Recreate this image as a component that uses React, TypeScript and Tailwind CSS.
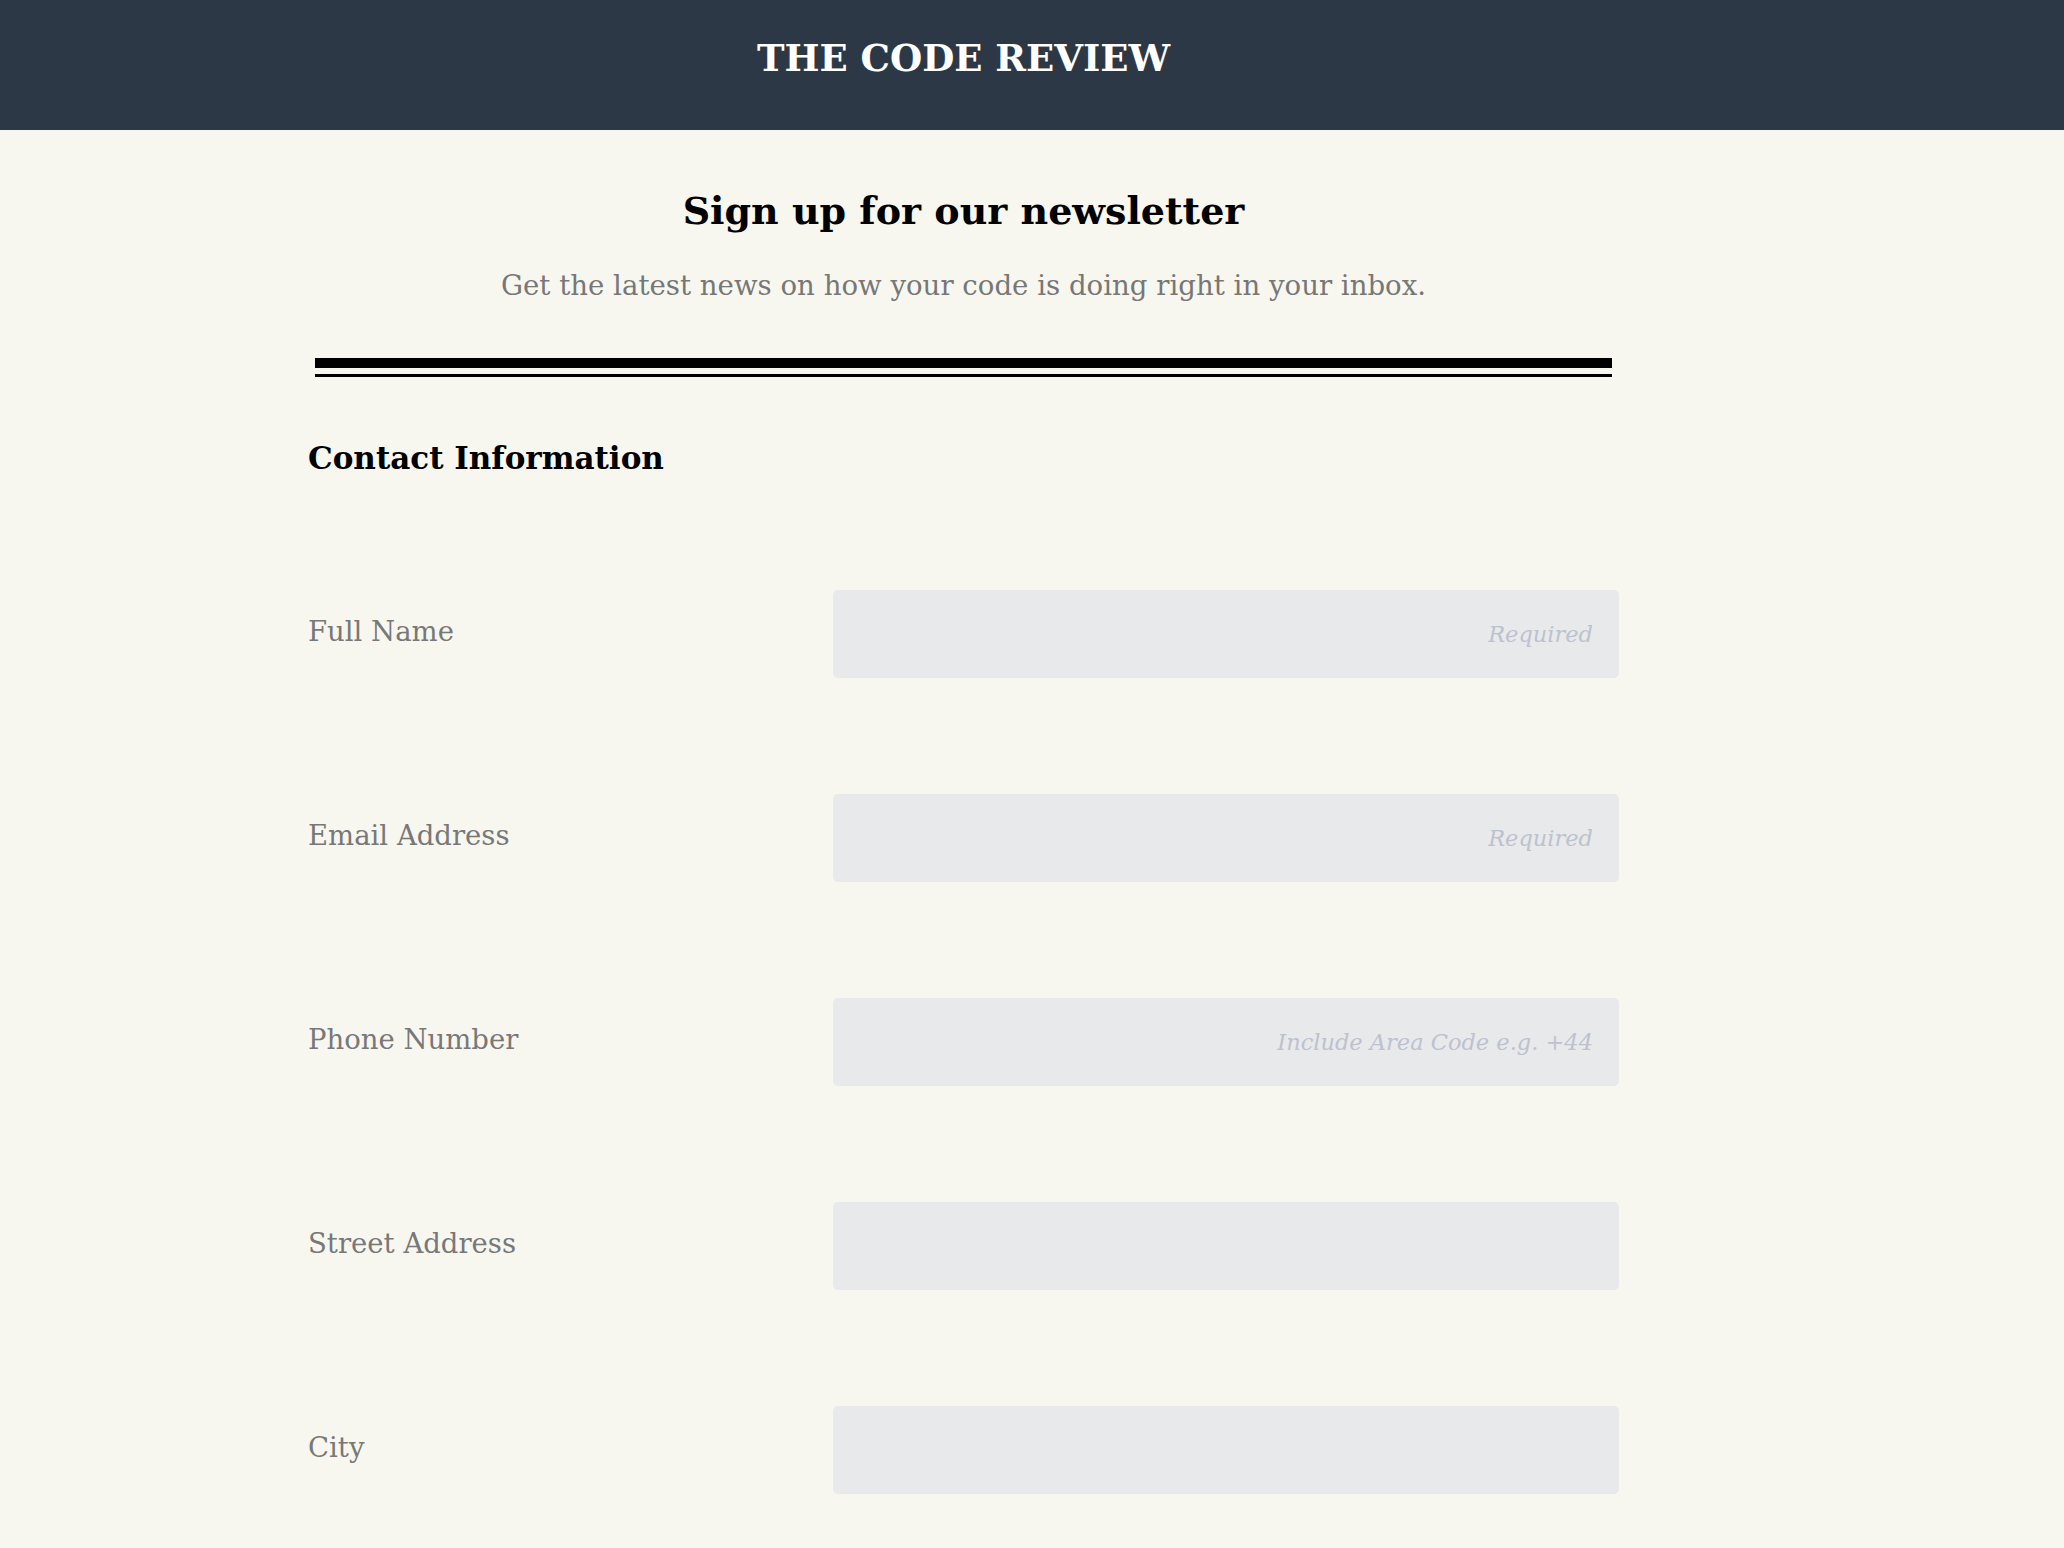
const fields = [
  { label: 'Full Name', placeholder: 'Required' },
  { label: 'Email Address', placeholder: 'Required' },
  { label: 'Phone Number', placeholder: 'Include Area Code e.g. +44' },
  { label: 'Street Address', placeholder: '' },
  { label: 'City', placeholder: '' },
]

export default function App() {
  return (
    <div className="min-h-screen bg-[#f7f7f0] font-['DejaVu_Serif',serif]">
      <header className="h-[130px] bg-[#2d3846]">
        <div className="ml-[308px] w-[1311px] pt-[34px] text-center">
          <h1 className="text-[37px] leading-[48px] font-bold text-white">THE CODE REVIEW</h1>
        </div>
      </header>

      <main className="ml-[308px] w-[1311px]">
        <h2 className="mt-[57px] text-center text-[38px] leading-[48px] font-bold text-black">
          Sign up for our newsletter
        </h2>
        <p className="mt-[33px] text-center text-[27.6px] leading-[36px] text-[#777777]">
          Get the latest news on how your code is doing right in your inbox.
        </p>

        <div className="mx-[7px] mt-[54px] h-[19px] border-t-[10px] border-b-[3px] border-black" />

        <h3 className="mt-[59px] text-[31px] leading-[44px] font-bold text-black">Contact Information</h3>

        <form className="mt-[110px] flex flex-col gap-[116px]">
          {fields.map((field) => (
            <div key={field.label} className="flex items-center">
              <label className="w-[525px] mb-[7px] text-[27.5px] leading-[36px] text-[#787878]">{field.label}</label>
              <input
                type="text"
                placeholder={field.placeholder}
                className="h-[88px] flex-1 rounded-[5px] bg-[#e8e9eb] pr-[26px] text-right text-[22.5px] italic outline-none placeholder:text-[#bcc2cf]"
              />
            </div>
          ))}
        </form>
      </main>
    </div>
  )
}
